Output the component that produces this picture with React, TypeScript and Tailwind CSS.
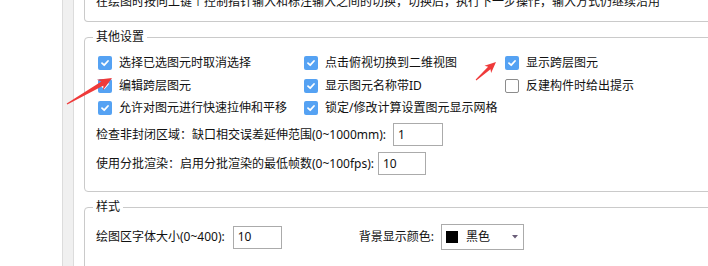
import React from 'react'

const font = { fontFamily: '"Noto Sans", "Noto Sans CJK SC", sans-serif' }

function Check({ checked, label }: { checked: boolean; label: string }) {
  return (
    <div className="flex items-center h-[22.5px]">
      {checked ? (
        <span className="ml-[2px] w-[14px] h-[14px] rounded-[2px] bg-[#55a2f3] flex items-center justify-center">
          <svg width="10" height="10" viewBox="0 0 10 10">
            <path d="M2 5.2 L4.2 7.2 L8 3" fill="none" stroke="#fff" strokeWidth="1.8" strokeLinecap="round" strokeLinejoin="round" />
          </svg>
        </span>
      ) : (
        <span className="ml-[2px] w-[14px] h-[14px] rounded-[2px] border border-[#8c8c8c] bg-white" />
      )}
      <span className="ml-[7px] whitespace-nowrap">{label}</span>
    </div>
  )
}

function NumBox({ value, w }: { value: string; w: string }) {
  return (
    <div className={`${w} h-[23px] border border-[#ababab] bg-white flex items-center pl-[4px]`}>{value}</div>
  )
}

export default function App() {
  return (
    <div className="relative w-[708px] h-[266px] overflow-hidden bg-white text-[12px] leading-[16px] text-[#111] flex" style={font}>
      {/* left side */}
      <div className="w-[62px] shrink-0 bg-white" />
      <div className="w-[12px] shrink-0 bg-[#f0f0f0] border-x border-[#dcdcdc]" />

      {/* panel */}
      <div className="pl-[10px] w-[670px] shrink-0">
        {/* previous group (cut off) */}
        <div className="h-[22px] border-x border-b border-[#cacaca] rounded-b-[4px] pl-[11px] overflow-hidden">
          <div className="-mt-[6px] whitespace-nowrap">
            在绘图时按向上键↑控制指针输入和标注输入之间的切换，切换后，执行下一步操作，输入方式仍继续沿用
          </div>
        </div>

        {/* 其他设置 */}
        <fieldset className="mt-[7px] border border-[#cacaca] rounded-[4px] pl-[11px] pt-[7px] pb-[16px]">
          <legend className="-ml-[3px] px-[3px]">其他设置</legend>
          <div className="grid grid-cols-[206px_201px_1fr]">
            <Check checked label="选择已选图元时取消选择" />
            <Check checked label="点击俯视切换到二维视图" />
            <Check checked label="显示跨层图元" />
            <Check checked label="编辑跨层图元" />
            <Check checked label="显示图元名称带ID" />
            <Check checked={false} label="反建构件时给出提示" />
            <Check checked label="允许对图元进行快速拉伸和平移" />
            <Check checked label="锁定/修改计算设置图元显示网格" />
          </div>
          <div className="mt-[3.5px] flex items-center">
            <span className="whitespace-nowrap">检查非封闭区域：缺口相交误差延伸范围(0~1000mm):</span>
            <div className="ml-[7px]">
              <NumBox value="1" w="w-[50px]" />
            </div>
          </div>
          <div className="mt-[6px] flex items-center">
            <span className="whitespace-nowrap">使用分批渲染：启用分批渲染的最低帧数(0~100fps):</span>
            <div className="ml-[4px]">
              <NumBox value="10" w="w-[48px]" />
            </div>
          </div>
        </fieldset>

        {/* 样式 */}
        <fieldset className="mt-[7px] border border-[#cacaca] rounded-[4px] pl-[11px] pt-[9px] pb-[20px]">
          <legend className="-ml-[3px] px-[3px]">样式</legend>
          <div className="flex items-center h-[26px]">
            <span className="whitespace-nowrap">绘图区字体大小(0~400):</span>
            <div className="ml-[8px]">
              <NumBox value="10" w="w-[49px]" />
            </div>
            <span className="ml-[77px] whitespace-nowrap">背景显示颜色:</span>
            <div className="ml-[7px] w-[83px] h-[26px] border border-[#ababab] bg-white flex items-center pl-[4px] pr-[5px]">
              <span className="w-[12px] h-[12px] bg-black" />
              <span className="ml-[8px]">黑色</span>
              <svg className="ml-auto" width="6" height="4" viewBox="0 0 6 4">
                <path d="M0 0 H6 L3 3.5 Z" fill="#6a5d78" />
              </svg>
            </div>
          </div>
        </fieldset>
      </div>

      {/* annotation arrows */}
      <svg className="absolute left-0 top-0 pointer-events-none" width="708" height="266">
        <polygon
          points="112,78 102.9,90.2 103.6,85.4 67.3,104.5 66.7,103.5 101.4,81.6 96.9,79.8"
          fill="#ef3a3a"
        />
        <polygon
          points="496,62 491.1,73.1 490.5,69.3 476.3,80.4 475.7,79.6 488.1,66.7 484.5,65.7"
          fill="#ef3a3a"
        />
      </svg>
    </div>
  )
}
